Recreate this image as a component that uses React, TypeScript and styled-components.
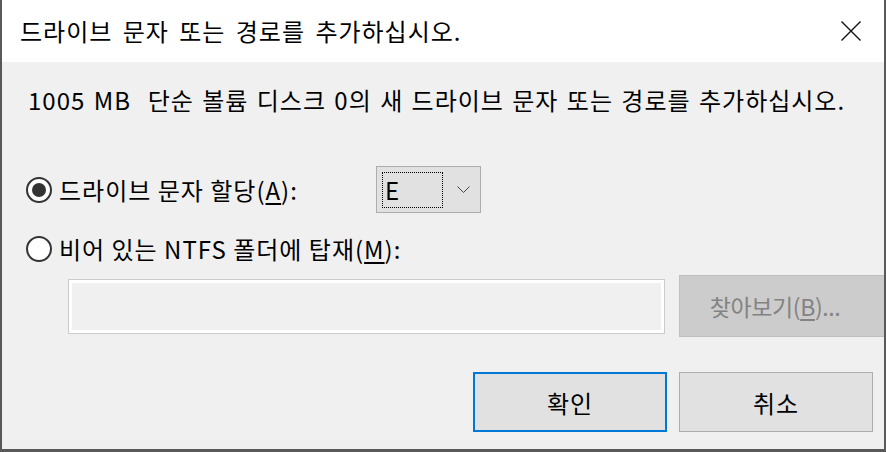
import React from 'react';
import styled, { createGlobalStyle } from 'styled-components';

const GlobalStyle = createGlobalStyle`
  html, body {
    margin: 0;
    padding: 0;
    background: #f0f0f0;
  }
  * {
    box-sizing: border-box;
  }
`;

const FONT = `"Noto Sans CJK KR", "Noto Sans", sans-serif`;

const Window = styled.div`
  width: 886px;
  height: 452px;
  display: flex;
  flex-direction: column;
  background: #f0f0f0;
  border-left: 2px solid #595959;
  border-right: 2px solid #595959;
  border-bottom: 3px solid #595959;
  font-family: ${FONT};
  color: #000;
  overflow: hidden;
`;

const TitleBar = styled.div`
  height: 62px;
  flex: none;
  background: #ffffff;
  display: flex;
  align-items: center;
  justify-content: space-between;
  padding-left: 18px;
  padding-right: 23px;
`;

const Title = styled.div`
  font-size: 24px;
  line-height: 30px;
  letter-spacing: 1px;
  word-spacing: 4px;
  white-space: nowrap;
`;

const CloseButton = styled.div`
  width: 20px;
  height: 20px;
  display: flex;
  align-items: center;
  justify-content: center;
`;

const Body = styled.div`
  flex: 1;
  display: flex;
  flex-direction: column;
  padding-left: 24px;
`;

const Description = styled.div`
  margin-top: 23px;
  margin-left: 2px;
  font-size: 24px;
  line-height: 30px;
  letter-spacing: 1px;
  word-spacing: 2px;
  white-space: nowrap;
`;

const OptionRow = styled.div<{ $top: number; $height: number }>`
  margin-top: ${p => p.$top}px;
  height: ${p => p.$height}px;
  display: flex;
  align-items: center;
`;

const Radio = styled.div<{ $checked?: boolean }>`
  width: 26px;
  height: 26px;
  flex: none;
  border-radius: 50%;
  border: 2px solid #333333;
  background: #ffffff;
  display: flex;
  align-items: center;
  justify-content: center;
  &::after {
    content: '';
    width: 14px;
    height: 14px;
    border-radius: 50%;
    background: ${p => (p.$checked ? '#333333' : 'transparent')};
  }
`;

const OptionLabel = styled.div<{ $width?: number }>`
  margin-left: 7px;
  font-size: 24px;
  line-height: 30px;
  letter-spacing: 1px;
  white-space: nowrap;
  width: ${p => (p.$width ? `${p.$width}px` : 'auto')};
  u {
    text-underline-offset: 3px;
  }
`;

const Combo = styled.div`
  width: 105px;
  height: 47px;
  flex: none;
  border: 1px solid #adadad;
  background: #e1e1e1;
  display: flex;
  align-items: center;
  padding-left: 5px;
  padding-right: 10px;
  justify-content: space-between;
`;

const ComboValue = styled.div`
  width: 61px;
  height: 36px;
  border: 1px dotted #000000;
  font-size: 24px;
  line-height: 34px;
  padding-left: 2px;
`;

const PathRow = styled.div`
  margin-top: 11px;
  margin-left: 42px;
  display: flex;
  align-items: center;
  gap: 14px;
`;

const PathInput = styled.div`
  width: 597px;
  height: 55px;
  flex: none;
  border: 1px solid #cccccc;
  background: #f0f0f0;
  box-shadow: inset 0 0 0 3px #ffffff;
`;

const BrowseButton = styled.div`
  width: 206px;
  height: 62px;
  flex: none;
  background: #cccccc;
  border: 1px solid #bfbfbf;
  color: #838383;
  font-size: 23px;
  display: flex;
  align-items: center;
  justify-content: center;
  padding-right: 14px;
  letter-spacing: -0.4px;
  u {
    text-underline-offset: 3px;
  }
`;

const Footer = styled.div`
  margin-top: 35px;
  display: flex;
  justify-content: flex-end;
  gap: 12px;
  padding-right: 11px;
`;

const DialogButton = styled.div<{ $primary?: boolean }>`
  width: 194px;
  height: 60px;
  background: #e1e1e1;
  border: ${p => (p.$primary ? '2px solid #0078d7' : '1px solid #adadad')};
  display: flex;
  align-items: center;
  justify-content: center;
  font-size: 24px;
  letter-spacing: 1px;
`;

const App = () => {
  return (
    <>
      <GlobalStyle />
      <Window>
        <TitleBar>
          <Title>드라이브 문자 또는 경로를 추가하십시오.</Title>
          <CloseButton>
            <svg width="20" height="20" viewBox="0 0 20 20">
              <path d="M0.5 0.5 L19.5 19.5 M19.5 0.5 L0.5 19.5" stroke="#111" strokeWidth="1.4" fill="none" />
            </svg>
          </CloseButton>
        </TitleBar>
        <Body>
          <Description>1005 MB&nbsp; 단순 볼륨 디스크 0의 새 드라이브 문자 또는 경로를 추가하십시오.</Description>
          <OptionRow $top={51} $height={47}>
            <Radio $checked />
            <OptionLabel $width={317}>
              드라이브 문자 할당(<u>A</u>):
            </OptionLabel>
            <Combo>
              <ComboValue>E</ComboValue>
              <svg width="13" height="8" viewBox="0 0 13 8">
                <polyline points="0.5,0.5 6.5,6.5 12.5,0.5" stroke="#444" strokeWidth="1" fill="none" />
              </svg>
            </Combo>
          </OptionRow>
          <OptionRow $top={21} $height={30}>
            <Radio />
            <OptionLabel>
              비어 있는 NTFS 폴더에 탑재(<u>M</u>):
            </OptionLabel>
          </OptionRow>
          <PathRow>
            <PathInput />
            <BrowseButton>
              찾아보기(<u>B</u>)...
            </BrowseButton>
          </PathRow>
          <Footer>
            <DialogButton $primary>확인</DialogButton>
            <DialogButton>취소</DialogButton>
          </Footer>
        </Body>
      </Window>
    </>
  );
};

export default App;
